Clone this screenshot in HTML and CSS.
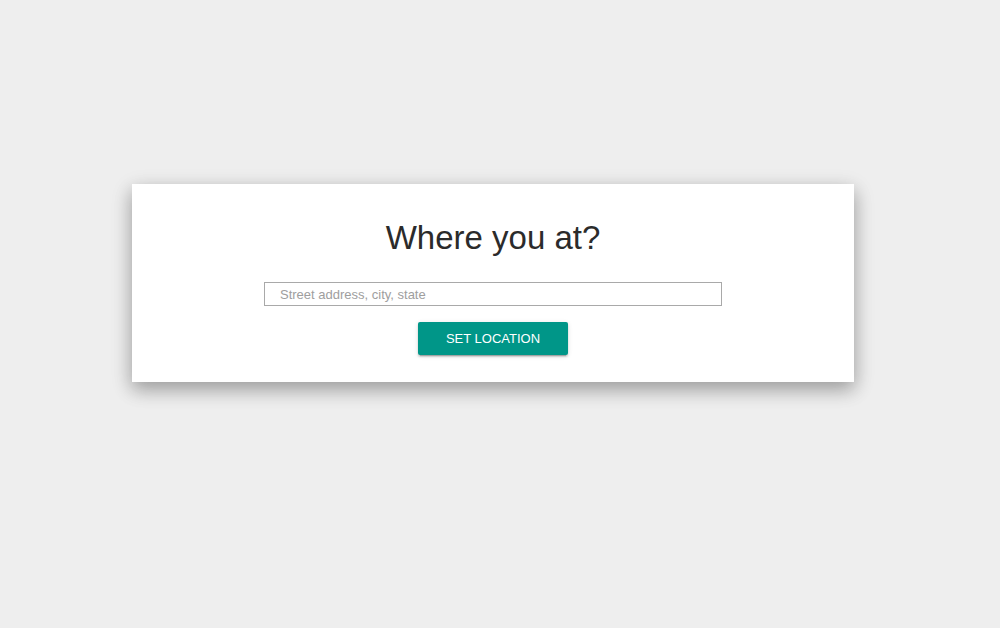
FILE: index.html
```html
<!DOCTYPE html>
<html>
<head>
<meta charset="utf-8">
<link rel="stylesheet" href="styles.css">
</head>
<body>
<div class="card">
  <h1 class="title">Where you at?</h1>
  <input class="address" type="text" placeholder="Street address, city, state">
  <button class="btn">SET LOCATION</button>
</div>
</body>
</html>
```
FILE: styles.css
```css
html, body {
  margin: 0;
  padding: 0;
  background: #eeeeee;
  font-family: "Liberation Sans", Arial, sans-serif;
}
body {
  min-height: 628px;
  overflow: hidden;
}
.card {
  box-sizing: border-box;
  width: 722px;
  height: 198px;
  margin: 184px 0 0 132px;
  background: #fff;
  display: flex;
  flex-direction: column;
  align-items: center;
  padding-top: 34px;
  box-shadow: 0 8px 17px 0 rgba(0,0,0,.2), 0 6px 20px 0 rgba(0,0,0,.19);
}
.title {
  margin: 0;
  font-size: 33px;
  line-height: 40px;
  font-weight: 400;
  color: #2b2b2b;
}
.address {
  box-sizing: border-box;
  margin-top: 24px;
  width: 458px;
  height: 24px;
  border: 1px solid #a9a9a9;
  padding: 0 0 0 15px;
  font-family: "Liberation Sans", Arial, sans-serif;
  font-size: 13px;
  color: #333;
  outline: none;
}
.address::placeholder {
  color: #9e9e9e;
}
.btn {
  margin-top: 16px;
  width: 150px;
  height: 33px;
  border: none;
  border-radius: 2px;
  background: #009688;
  color: #fff;
  font-family: "Liberation Sans", Arial, sans-serif;
  font-size: 13px;
  padding: 0;
  box-shadow: 0 2px 2px 0 rgba(0,0,0,.14), 0 1px 5px 0 rgba(0,0,0,.12), 0 3px 1px -2px rgba(0,0,0,.2);
}
```
